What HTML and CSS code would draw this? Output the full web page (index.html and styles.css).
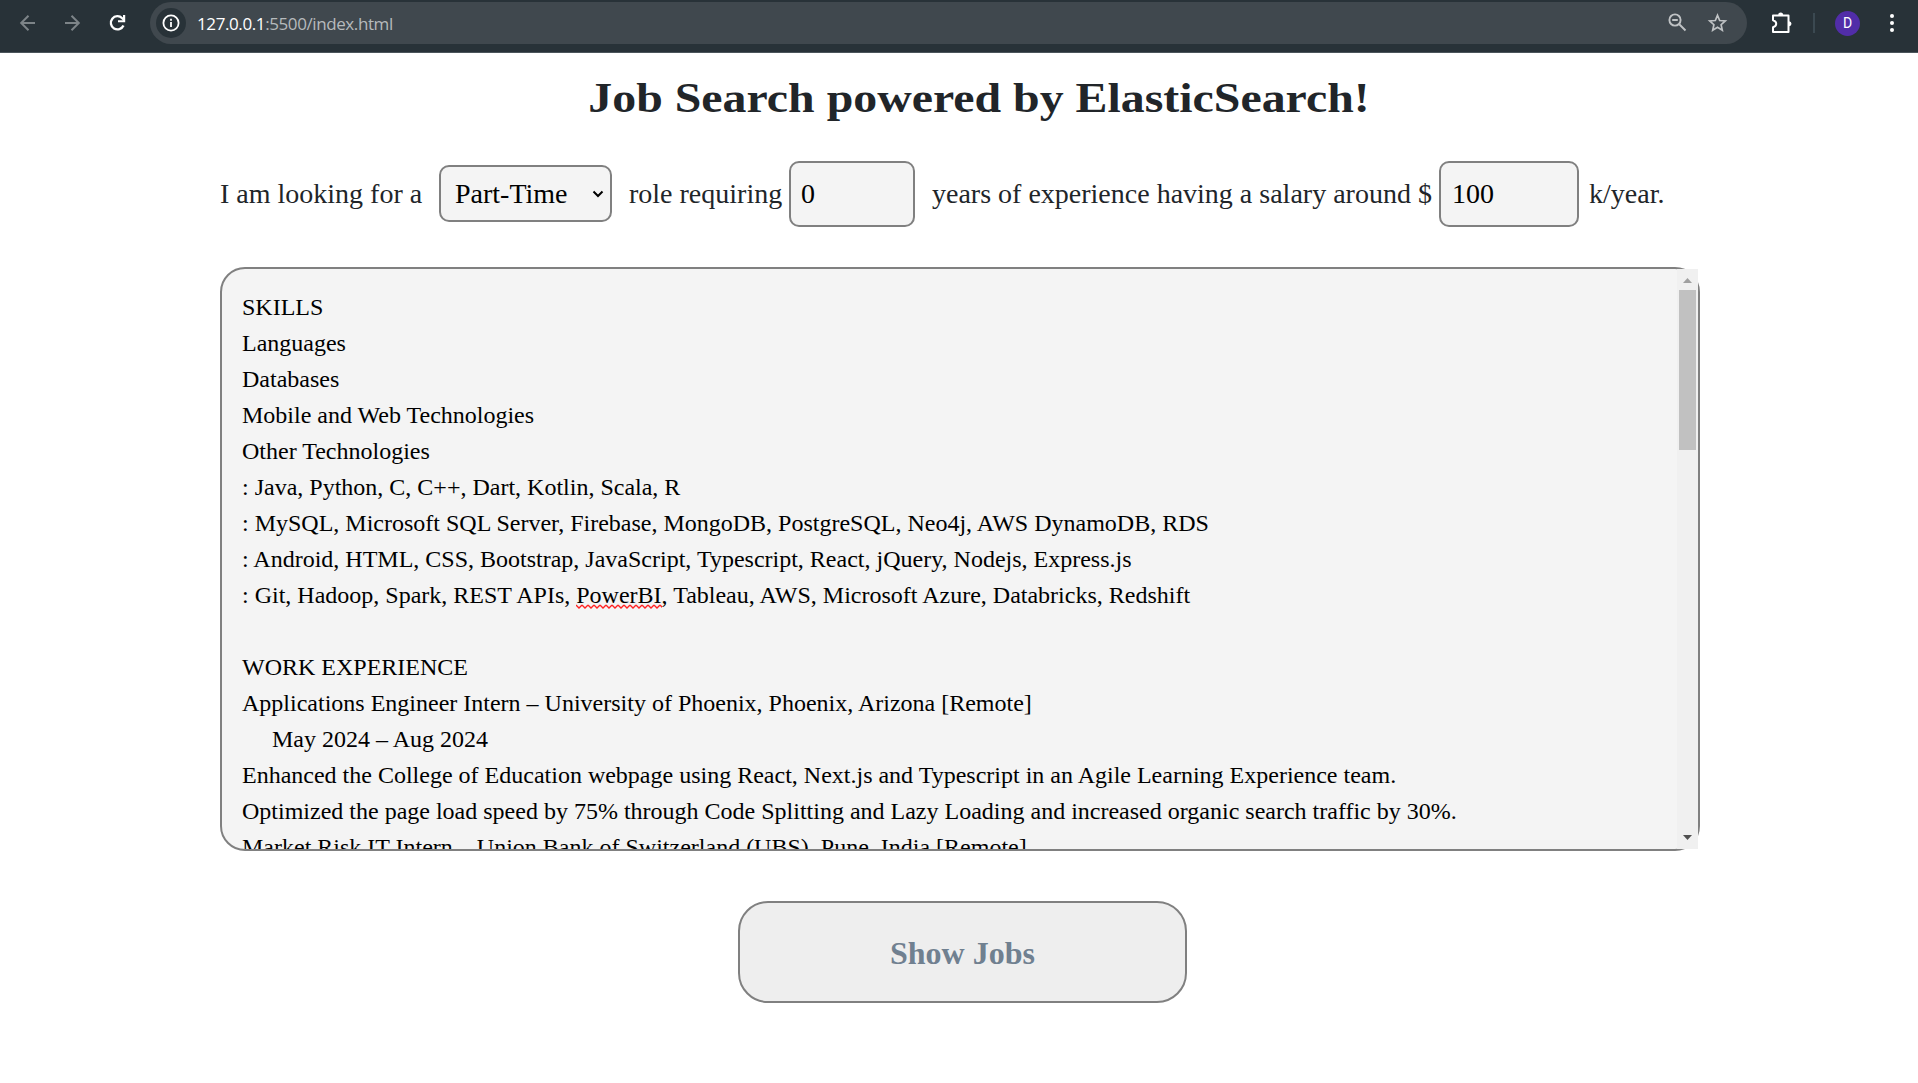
FILE: index.html
```html
<!DOCTYPE html>
<html lang="en">
<head>
<meta charset="utf-8">
<title>Job Search</title>
<link rel="stylesheet" href="styles.css">
</head>
<body>
<header class="toolbar">
  <svg class="nav-icons" width="150" height="46" viewBox="0 0 150 46" fill="none" stroke-width="2">
    <g stroke="#7d8488"><path d="M35 23H21.500M28.500 15.700L21.200 23l7.300 7.300"/><path d="M65 23h13.500M71.500 15.700L78.800 23l-7.300 7.300"/></g>
    <path stroke="#fff" stroke-width="2.300" d="M123.500 25.500a6.600 6.600 0 1 1-1.300-7.300l2 2"/><path fill="#fff" d="M125.200 15v7.200h-7.200v-2h5v-5.200z"/>
  </svg>
  <div class="address">
    <span class="site-info"><svg width="18" height="18" viewBox="0 0 18 18" fill="none" stroke="#fff" stroke-width="1.800"><circle cx="9" cy="9" r="7.600"/><path d="M9 8v5M9 4.800v2"/></svg></span>
    <span class="url"><b>127.0.0.1</b>:5500/index.html</span>
    <svg class="address-icons" width="60" height="20" viewBox="0 0 60 20" fill="none" stroke="#bfc2c4" stroke-width="1.900"><circle cx="7" cy="7" r="5.600"/><path d="M11 11l6.500 6.500M4.200 7h5.600"/><path stroke-width="1.700" d="M49.500 2.300l2.200 5.200 5.600.5-4.200 3.700 1.200 5.500-4.800-2.900-4.800 2.900 1.200-5.500-4.200-3.700 5.600-.5z"/></svg>
  </div>
  <svg class="puzzle" width="22" height="22" viewBox="0 0 22 22"><path fill="none" stroke="#fff" stroke-width="2" stroke-linejoin="round" d="M2 3.500h15.500V20H2v-4.700c4.300-1.200 4.300-5.900 0-7.100z"/><path fill="#fff" d="M7.200 3a2.500 2.500 0 0 1 5 0zM18 9.200a2.500 2.500 0 0 1 0 5z"/></svg>
  <span class="divider"></span>
  <span class="avatar">D</span>
  <svg class="menu" width="6" height="20" viewBox="0 0 6 20" fill="#fff"><circle cx="3" cy="3" r="2"/><circle cx="3" cy="10" r="2"/><circle cx="3" cy="17" r="2"/></svg>
</header>
<main>
  <h1><span>Job Search powered by ElasticSearch!</span></h1>
  <form class="criteria">
    <span>I am looking for a</span>
    <div class="field select">Part-Time<svg width="12" height="8" viewBox="0 0 12 8" fill="none" stroke="#000" stroke-width="2"><path d="M1.500 1.500L6 6l4.500-4.500"/></svg></div>
    <span>role requiring</span>
    <div class="field">0</div>
    <span>years of experience having a salary around $</span>
    <div class="field salary">100</div>
    <span>k/year.</span>
  </form>
  <section class="resume">
    <div class="resume-text">SKILLS
Languages
Databases
Mobile and Web Technologies
Other Technologies
: Java, Python, C, C++, Dart, Kotlin, Scala, R
: MySQL, Microsoft SQL Server, Firebase, MongoDB, PostgreSQL, Neo4j, AWS DynamoDB, RDS
: Android, HTML, CSS, Bootstrap, JavaScript, Typescript, React, jQuery, Nodejs, Express.js
: Git, Hadoop, Spark, REST APIs, <span class="misspelt">PowerBI<svg width="86" height="5"><defs><pattern id="wave" width="6" height="5" patternUnits="userSpaceOnUse"><path d="M0 1L3 4L6 1" fill="none" stroke="#f22" stroke-width="1.300"/></pattern></defs><rect width="86" height="5" fill="url(#wave)"/></svg></span>, Tableau, AWS, Microsoft Azure, Databricks, Redshift

WORK EXPERIENCE
Applications Engineer Intern – University of Phoenix, Phoenix, Arizona [Remote]
     May 2024 – Aug 2024
Enhanced the College of Education webpage using React, Next.js and Typescript in an Agile Learning Experience team.
Optimized the page load speed by 75% through Code Splitting and Lazy Loading and increased organic search traffic by 30%.
Market Risk IT Intern – Union Bank of Switzerland (UBS), Pune, India [Remote]</div>
    <div class="scrollbar"><i class="up"></i><i class="thumb"></i><i class="down"></i></div>
  </section>
  <button class="show">Show Jobs</button>
</main>
</body>
</html>
```
FILE: styles.css
```css
* { box-sizing: border-box; }
body { margin: 0; background: #fff; color: #212529; font-family: "Liberation Serif", "Times New Roman", serif; }
.toolbar { display: flex; align-items: center; height: 53px; padding-bottom: 6px; background: #283238; border-bottom: 1px solid #4b555b; }
.nav-icons { flex: none; }
.address { display: flex; align-items: center; width: 1597px; height: 42px; padding: 0 19px 0 6px; border-radius: 21px; background: #40484e; }
.site-info { display: grid; place-items: center; width: 30px; height: 30px; border-radius: 50%; background: #283238; }
.url { margin-left: 11px; font: 17px "Open Sans", "Noto Sans", sans-serif; letter-spacing: -0.4px; color: #b6babc; }
.url b { font-weight: 400; color: #fff; }
.address-icons { margin-left: auto; }
.puzzle { margin-left: 24px; }
.divider { width: 2px; height: 20px; margin-left: 20px; background: #3b4951; }
.avatar { display: grid; place-items: center; width: 25px; height: 25px; margin-left: 20px; border-radius: 50%; background: #512da8; color: #fff; font: 14px Roboto, sans-serif; }
.menu { margin-left: 29px; }
main { width: 1480px; margin-left: 220px; }
h1 { display: flex; justify-content: center; margin: 0; padding: 21px 0 0 39px; height: 108px; font-size: 42px; line-height: 48px; white-space: nowrap; }
h1 span { transform: scaleX(1.139); }
.criteria { display: grid; grid-template-columns: 219px 190px 160px 143px 507px 150px 1fr; align-items: center; height: 66px; font-size: 28px; white-space: nowrap; }
.field { display: flex; align-items: center; width: 126px; height: 66px; padding-left: 10px; border: 2px solid #808080; border-radius: 10px; background: #f4f4f4; color: #000; }
.select { width: 173px; height: 57px; margin-bottom: 1px; padding: 0 6px 0 14px; justify-content: space-between; }
.salary { width: 140px; padding-left: 11px; }
.resume { display: flex; height: 584px; margin-top: 40px; border: 2px solid #808080; border-radius: 25px; background: #f4f4f4; }
.resume-text { flex: 1; overflow: hidden; padding: 20px; color: #000; font-size: 24px; line-height: 36px; white-space: pre; }
.misspelt { position: relative; }
.misspelt svg { position: absolute; left: 0; bottom: -1px; }
.scrollbar { display: flex; flex-direction: column; align-items: center; width: 21px; padding: 9px 0; background: #f0f0f0; }
.up, .down { width: 9px; height: 5px; }
.up { background: #a0a0a0; clip-path: polygon(50% 0, 100% 100%, 0 100%); }
.thumb { width: 17px; height: 160px; margin-top: 7px; background: #c1c1c1; }
.down { margin-top: auto; background: #505050; clip-path: polygon(0 0, 100% 0, 50% 100%); }
.show { display: block; width: 449px; height: 102px; margin: 50px 0 0 518px; padding: 2px 0 0; border: 2px solid #808080; border-radius: 30px; background: #eee; color: #708090; font: bold 32px "Liberation Serif", serif; }
```
